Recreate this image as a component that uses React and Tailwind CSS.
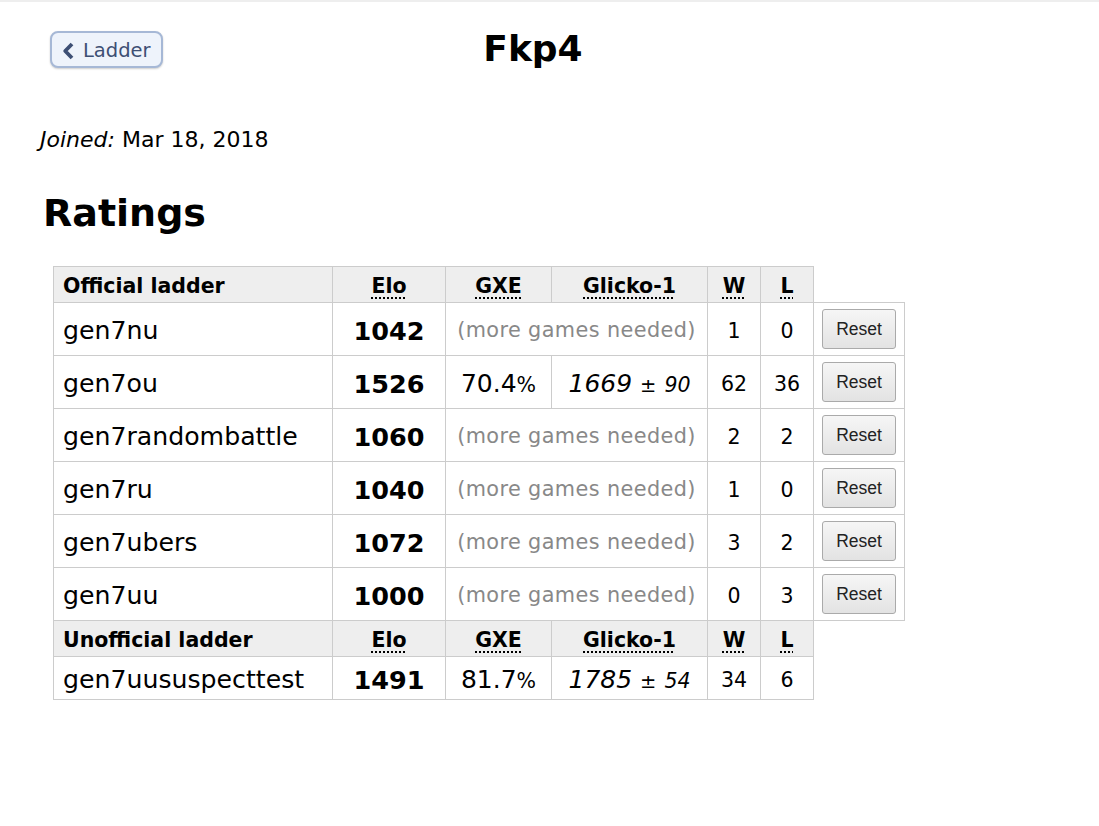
import React from 'react';

const ratings = [
  { format: 'gen7nu', elo: 1042, w: 1, l: 0 },
  { format: 'gen7ou', elo: 1526, gxe: '70.4', r: 1669, rd: 90, w: 62, l: 36 },
  { format: 'gen7randombattle', elo: 1060, w: 2, l: 2 },
  { format: 'gen7ru', elo: 1040, w: 1, l: 0 },
  { format: 'gen7ubers', elo: 1072, w: 3, l: 2 },
  { format: 'gen7uu', elo: 1000, w: 0, l: 3 },
];

const unofficial = [{ format: 'gen7uususpecttest', elo: 1491, gxe: '81.7', r: 1785, rd: 54, w: 34, l: 6 }];

function ChevronLeft() {
  return (
    <svg width="13" height="18" viewBox="0 0 13 18" className="mr-[8px]">
      <path d="M10 2 L3.2 9 L10 16" fill="none" stroke="#3d4f74" strokeWidth="3.8" strokeLinejoin="round" />
    </svg>
  );
}

function Abbr({ children }) {
  return <span className="underline decoration-dotted decoration-2 underline-offset-[4px]">{children}</span>;
}

function HeaderRow({ label }) {
  const th = 'border border-[#ccc] font-bold pt-[4px]';
  return (
    <tr className="bg-[#eee] font-bold text-[20.5px]">
      <th className={th + ' h-[36px] text-left px-[9px]'}>{label}</th>
      <th className={th}><Abbr>Elo</Abbr></th>
      <th className={th}><Abbr>GXE</Abbr></th>
      <th className={th}><Abbr>Glicko-1</Abbr></th>
      <th className={th}><Abbr>W</Abbr></th>
      <th className={th}><Abbr>L</Abbr></th>
    </tr>
  );
}

function RatingRow({ row, reset, tall = true }) {
  const cell = 'border border-[#ccc] text-center pt-[4px]';
  return (
    <tr className={tall ? 'h-[53px]' : 'h-[42px]'}>
      <td className="border border-[#ccc] text-left px-[9px] pt-[4px] text-[25.2px]">{row.format}</td>
      <td className={cell + ' text-[25.5px] font-bold'}>{row.elo}</td>
      {row.gxe ? (
        <>
          <td className={cell + ' text-[25px]'}>
            {row.gxe}<span className="text-[20.5px]">%</span>
          </td>
          <td className={cell + ' text-[25px] italic'}>
            {row.r} <span className="text-[19.5px] not-italic">±</span> <span className="text-[20.5px]">{row.rd}</span>
          </td>
        </>
      ) : (
        <td colSpan={2} className={cell + ' text-[20.8px] text-[#888] tracking-[0.4px]'}>(more games needed)</td>
      )}
      <td className={cell + ' text-[20.5px]'}>{row.w}</td>
      <td className={cell + ' text-[20.5px]'}>{row.l}</td>
      {reset && (
        <td className="border border-[#ccc] text-center">
          <button className="h-[40px] w-[74px] rounded-[3px] border border-[#aaa] bg-gradient-to-b from-[#f6f6f6] to-[#e3e3e3] text-[17.5px] text-[#222] [font-family:'Liberation_Sans',Arial,sans-serif]">
            Reset
          </button>
        </td>
      )}
    </tr>
  );
}

export default function App() {
  return (
    <div className="min-h-[826px] bg-white border-t-2 border-[#eee] text-black [font-family:'DejaVu_Sans',Verdana,sans-serif]">
      <div className="pl-[40px] pr-[73px]">
        <div className="grid grid-cols-[1fr_auto_1fr] items-center pt-[27px]">
          <div className="pl-[10px]">
            <button className="flex items-center h-[37px] px-[10px] pt-[3px] rounded-[8px] border-2 border-[#a6b8d6] bg-[#eef3fb] text-[#3d4f74] text-[19.5px] shadow-[0_1px_2px_rgba(0,0,0,0.2)]">
              <ChevronLeft />
              Ladder
            </button>
          </div>
          <h1 className="text-[36px] font-bold leading-[40px]">Fkp4</h1>
          <div />
        </div>

        <p className="mt-[57px] text-[22px] leading-[28px]">
          <em>Joined:</em> Mar 18, 2018
        </p>

        <h2 className="mt-[37px] ml-[3px] text-[38px] font-bold leading-[44px]">Ratings</h2>

        <table className="mt-[31px] ml-[13px] border-collapse table-fixed w-[851px]">
          <colgroup>
            <col className="w-[279px]" />
            <col className="w-[113px]" />
            <col className="w-[106px]" />
            <col className="w-[156px]" />
            <col className="w-[53px]" />
            <col className="w-[53px]" />
            <col className="w-[91px]" />
          </colgroup>
          <tbody>
            <HeaderRow label="Official ladder" />
            {ratings.map((row) => (
              <RatingRow key={row.format} row={row} reset />
            ))}
            <HeaderRow label="Unofficial ladder" />
            {unofficial.map((row) => (
              <RatingRow key={row.format} row={row} tall={false} />
            ))}
          </tbody>
        </table>
      </div>
    </div>
  );
}
